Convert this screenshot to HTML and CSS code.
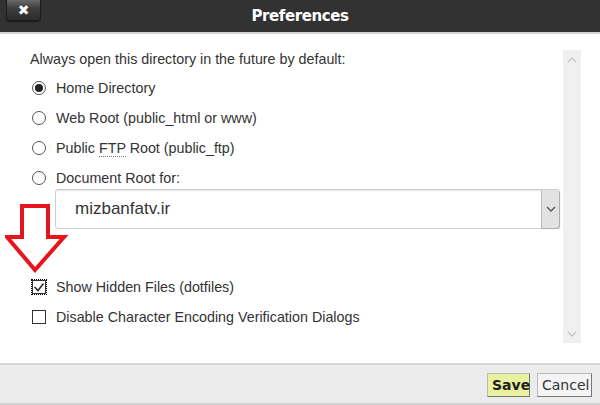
FILE: index.html
```html
<!DOCTYPE html>
<html>
<head>
<meta charset="utf-8">
<link rel="stylesheet" href="styles.css">
</head>
<body>
<div class="dialog">
  <div class="header">
    <button class="close">&#x2716;</button>
    <div class="title">Preferences</div>
  </div>
  <div class="body">
    <div class="content">
      <p class="lead">Always open this directory in the future by default:</p>
      <label class="opt"><span class="radio on"></span><span>Home Directory</span></label>
      <label class="opt"><span class="radio"></span><span>Web Root (public_html or www)</span></label>
      <label class="opt"><span class="radio"></span><span>Public <abbr>FTP</abbr> Root (public_ftp)</span></label>
      <label class="opt"><span class="radio"></span><span>Document Root for:</span></label>
      <div class="select">
        <span class="value">mizbanfatv.ir</span>
        <span class="drop"><svg width="10" height="6" viewBox="0 0 10 6"><path d="M1 1 L5 5 L9 1" fill="none" stroke="#555" stroke-width="1.3"/></svg></span>
      </div>
      <div class="spacer"></div>
      <label class="opt"><span class="check on"><svg width="10" height="9" viewBox="0 0 10 9"><path d="M0.5 4 L4 7.5 L9.5 0.5" fill="none" stroke="#222" stroke-width="1.5"/></svg></span><span>Show Hidden Files (dotfiles)</span></label>
      <label class="opt"><span class="check"></span><span>Disable Character Encoding Verification Dialogs</span></label>
      <svg class="arrow" width="66" height="72" viewBox="0 0 66 72">
        <path d="M17 2 H43 V33 H59 L30 66 L2 33 H17 Z" fill="#fff" stroke="#e8141c" stroke-width="4" stroke-linejoin="miter"/>
      </svg>
    </div>
    <div class="scrollbar">
      <svg width="10" height="6" viewBox="0 0 10 6"><path d="M1 5 L5 1 L9 5" fill="none" stroke="#c4c4c4" stroke-width="1.3"/></svg>
      <svg width="10" height="6" viewBox="0 0 10 6"><path d="M1 1 L5 5 L9 1" fill="none" stroke="#c4c4c4" stroke-width="1.3"/></svg>
    </div>
  </div>
  <div class="footer">
    <button class="btn save">Save</button>
    <button class="btn cancel">Cancel</button>
  </div>
</div>
</body>
</html>
```
FILE: styles.css
```css
* { box-sizing: border-box; }
html, body { margin: 0; padding: 0; }
body { width: 600px; height: 405px; overflow: hidden; background: #fff; font-family: "Liberation Sans", Arial, sans-serif; }
.dialog { width: 600px; height: 405px; display: flex; flex-direction: column; }
.header {
  height: 34px; background: #323232; border-bottom: 2px solid #d4d4d4;
  display: flex; align-items: center; justify-content: center; position: relative;
}
.title { color: #fff; font-family: "DejaVu Sans", sans-serif; font-weight: bold; font-size: 15px; letter-spacing: -0.4px; margin-top: -1px; }
.close {
  position: absolute; left: 6px; top: 0; width: 35px; height: 21px;
  border: 1px solid #1c1c1c; border-top: none; border-radius: 0 0 4px 4px;
  background: linear-gradient(#6a6a6a, #3e3e3e 40%, #2c2c2c);
  color: #fff; font-size: 14px; line-height: 18px; padding: 0;
  font-family: "DejaVu Sans", sans-serif; box-shadow: 0 1px 1px rgba(0,0,0,0.5);
}
.body { flex: 1; display: flex; padding: 16px 19px 13px 30px; }
.content { flex: 1; position: relative; color: #333; font-size: 14.3px; }
.lead { margin: 0 0 5px 0; line-height: 18px; }
.opt { display: flex; align-items: center; height: 30px; line-height: 18px; }
.radio {
  width: 14px; height: 14px; border: 1.3px solid #555; border-radius: 50%;
  margin: 0 10px 0 2px; display: inline-flex; align-items: center; justify-content: center; flex: none;
}
.radio.on::after { content: ""; width: 8px; height: 8px; border-radius: 50%; background: #222; }
abbr { text-decoration: none; border-bottom: 1px dotted #777; }
.select {
  margin: -4px 0 0 25px; height: 40px; border: 1px solid #cfcfcf; border-radius: 3px;
  display: flex; align-items: center; justify-content: space-between;
  box-shadow: inset 0 1px 1px #e4e4e4;
}
.value { font-size: 17px; color: #333; padding-left: 19px; }
.drop {
  width: 18px; height: 38px; background: #e2e2e2; border-left: 1px solid #bbb;
  display: flex; align-items: center; justify-content: center; border-radius: 0 3px 3px 0;
  box-shadow: 1px 1px 1px #aaa;
}
.spacer { height: 43px; }
.check {
  width: 14px; height: 14px; border: 1.3px solid #333; margin: 0 10px 0 2px; flex: none;
  display: inline-flex; align-items: center; justify-content: center;
}
.check.on { border: 1px solid #333; outline: 1px dotted #000; outline-offset: 0; }
.arrow { position: absolute; left: -25px; top: 154px; }
.scrollbar {
  width: 18px; margin: 0 0 7px 3px; background: #f0f0f0;
  display: flex; flex-direction: column; justify-content: space-between; align-items: center;
  padding: 7px 0 6px;
}
.footer {
  height: 42px; background: #ececec; border-top: 2px solid #d6d6d6; border-bottom: 2px solid #d0d0d0;
  display: flex; align-items: center; justify-content: flex-end; gap: 7px; padding-right: 8px;
}
.btn {
  height: 24px; font-family: Tahoma, "DejaVu Sans", sans-serif; font-size: 14px; color: #222;
  border: 1px solid #bbb; border-right-color: #777; border-bottom-color: #777; padding: 0 4px;
}
.save { background: #e9f09e; font-weight: bold; width: 43px; margin-top: 1px; }
.cancel { background: #f4f4f4; width: 55px; margin-top: 1px; color: #333; }
```
